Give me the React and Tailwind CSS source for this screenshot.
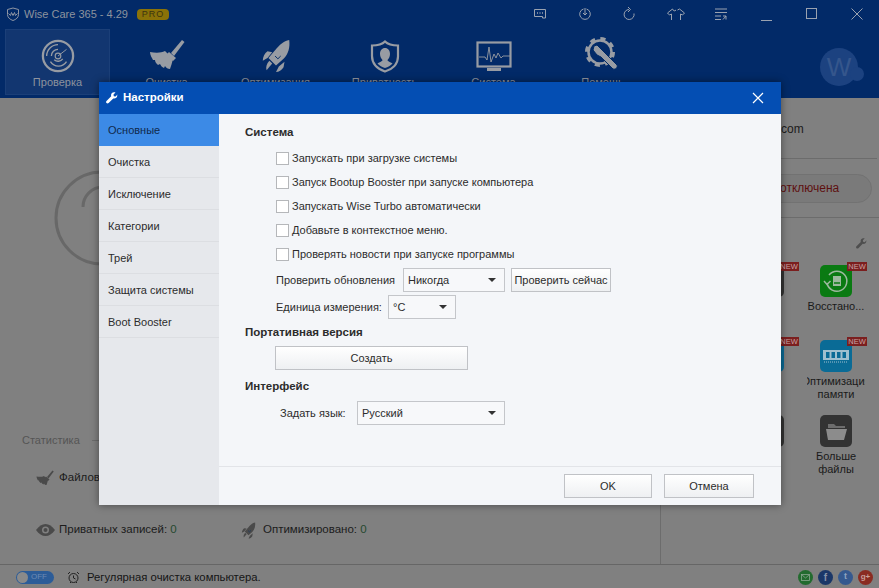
// App.jsx
const font = { fontFamily: '"Liberation Sans", Arial, sans-serif' };

const Radar = () => (
  <svg width="34" height="34" viewBox="0 0 36 36" fill="none" stroke="#989ca3">
    <circle cx="18" cy="18" r="16" strokeWidth="2.4" />
    <path d="M6 18a12 12 0 0 1 12-12M10 24a10 10 0 0 0 17 0M11 18a7 7 0 0 1 7-7M14 22a6 6 0 0 0 9-1" strokeWidth="1.4" />
    <circle cx="18" cy="18" r="3" strokeWidth="1.2" />
    <path d="M18 18l9-7" strokeWidth="1" />
  </svg>
);

const Broom = ({ size = 36, color = "#989ca3" }) => (
  <svg width={size} height={size} viewBox="0 0 36 36" fill={color}>
    <path d="M22 16L33 3l2.500 2L25 19z" />
    <path d="M20 15l7 6-3 3-7-6z" />
    <path d="M1 15c6 1 11 1 15-1l8 8c-1 4-2 7-3 10-2 0-4-1-5-3l-1 2c-2-1-3-2-4-4l-2 1c-2-2-3-3-3-5l-2 0C3 21 1 18 1 15z" />
  </svg>
);

const Rocket = ({ size = 34, color = "#989ca3" }) => (
  <svg width={size} height={size} viewBox="0 0 36 36" fill={color}>
    <path d="M32 1c1 8-1 15-6 20l-8 7-8-8 7-8C22 6 26 2 32 1z" />
    <path d="M9 13l5 1-5 6-5 3c0-4 2-8 5-10zM27 24l-1 6c-2 3-5 5-8 5l3-6z" />
    <path d="M11 23l3 3-6 7c-1-3 0-7 3-10z" />
    <path d="M17 18l3 3 3-3" fill="none" stroke="#002a66" strokeWidth="1" />
  </svg>
);

const Shield = () => (
  <svg width="30" height="33" viewBox="0 0 30 33" fill="none">
    <path d="M15 1.500c3 3 8 4 13 4v11c0 8-6 13-13 15C8 29 2 24 2 16V5.500c5 0 10-1 13-4z" stroke="#989ca3" strokeWidth="2.200" />
    <path d="M15 8c3 0 5 2.500 5 6 0 3-1.500 5-2.500 6 0 1.500 3 2 5 3.500-2 2-4.500 3.500-7.500 4.500-3-1-5.500-2.500-7.500-4.500 2-1.500 5-2 5-3.500-1-1-2.500-3-2.500-6 0-3.500 2-6 5-6z" fill="#989ca3" />
  </svg>
);

const Monitor = () => (
  <svg width="36" height="32" viewBox="0 0 36 32" fill="none">
    <rect x="1.500" y="1.500" width="33" height="24" stroke="#989ca3" strokeWidth="2.200" />
    <path d="M3 16h6l2 3 2-13 2 15 3-8 2 4 2-5 3 5 2-2h7" stroke="#989ca3" strokeWidth="0.900" />
    <rect x="11" y="27" width="14" height="3" fill="#989ca3" />
  </svg>
);

const Gear = () => (
  <svg width="36" height="36" viewBox="0 0 36 36" fill="none">
    <circle cx="15" cy="15" r="11.500" stroke="#989ca3" strokeWidth="2.500" />
    <circle cx="15" cy="15" r="13" stroke="#989ca3" strokeWidth="4" strokeDasharray="5 5.200" />
    <path d="M9 9l3-1 5 5 3 3 12 12c1 2-1 5-4 4L16 20l-4-2-4-5z" fill="#989ca3" stroke="#002a66" strokeWidth="1" />
  </svg>
);

const Wrench = ({ size = 12, color = "#fff" }) => (
  <svg width={size} height={size} viewBox="0 0 12 12" fill={color}>
    <path d="M11.500 2.500L9.500 4.500 7.800 4.200 7.500 2.500 9.500.5C8 0 6.500.3 5.700 1.300 5 2.200 4.900 3.300 5.200 4.300L.5 9c-.6.7-.6 1.500 0 2.100.6.600 1.500.6 2.100 0l4.700-4.700c1 .3 2.200.1 3-.6 1-1 1.200-2.300.7-3.300z" />
  </svg>
);

const iconProps = { width: 16, height: 16, viewBox: "0 0 16 16", fill: "none", stroke: "#9aa2b0", strokeWidth: 1 };

const winIcons = [
  <svg key="msg" {...iconProps}>
    <path d="M2.500 3.500h11v8.500h-3v-1.500h-8z" />
    <path d="M5 7h1M7.500 7h1M10 7h1" strokeWidth="1.300" />
  </svg>,
  <svg key="upd" {...iconProps}>
    <path d="M9.500 3a5.300 5.300 0 1 1-3 0" />
    <path d="M8 2v7M6 7l2 2 2-2" />
  </svg>,
  <svg key="redo" {...iconProps}>
    <path d="M7 3.500a5 5 0 1 0 5 4" />
    <path d="M6 1l2.500 2.500L6 6" />
  </svg>,
  <svg key="skin" {...iconProps} width="20" viewBox="0 0 20 16">
    <path d="M6.500 3L1.500 7l2 2 2-1v6M13.500 3l5 4-2 2-2-1v6M6.500 3c1 2 2 2.500 3.500 1M13.500 3l-2 1" />
  </svg>,
  <svg key="menu" {...iconProps}>
    <path d="M2 3h12M2 6.500h12M2 10h6M2 13.500h6M10 13.500l3-3.500M10 10h3v3.500" />
  </svg>,
  <svg key="min" {...iconProps}>
    <path d="M2 14.500h11" />
  </svg>,
  <svg key="max" {...iconProps}>
    <rect x="2.500" y="2.500" width="10" height="10" />
  </svg>,
  <svg key="close" {...iconProps}>
    <path d="M2.500 2.500l11 11M13.500 2.500l-11 11" />
  </svg>,
];

const tabs = [
  { label: "Проверка", icon: <Radar />, active: true },
  { label: "Очистка", icon: <Broom /> },
  { label: "Оптимизация", icon: <Rocket /> },
  { label: "Приватность", icon: <Shield /> },
  { label: "Система", icon: <Monitor /> },
  { label: "Помощь", icon: <Gear /> },
];

const Tab = ({ label, icon, active }) => (
  <div
    className={`flex h-[66px] w-[105px] flex-col items-center border ${
      active ? "border-[#1b3f78] bg-[#123670]" : "border-transparent"
    }`}
  >
    <div className="flex h-[43px] items-end">{icon}</div>
    <div className="mt-[2px] text-[11px] leading-[14px] text-[#8d939e]">{label}</div>
  </div>
);

const NewBadge = () => (
  <div className="absolute right-[-15px] top-[-3px] w-[20px] bg-[#7b1f1f] text-center text-[7.500px] leading-[9px] text-[#c9a3a3]">NEW</div>
);

const Tile = ({ bg, badge, lines, children }) => (
  <div className="flex w-[68px] flex-col items-center">
    <div className={`relative flex h-[32px] w-[32px] items-center justify-center rounded-[5px] ${bg}`}>
      {children}
      {badge && <NewBadge />}
    </div>
    <div className="mt-[3px] w-[58px] overflow-hidden text-[11px] leading-[13px] text-[#1a1a1a]">
      {lines.map((l) => (
        <div key={l} className="flex justify-center whitespace-nowrap">
          {l}
        </div>
      ))}
    </div>
  </div>
);

const Check = ({ children }) => (
  <div className="flex h-[24px] items-center">
    <div className="h-[13px] w-[13px] border border-[#b5b7ba] bg-white" />
    <span className="ml-[3px]">{children}</span>
  </div>
);

const Select = ({ w, value }) => (
  <div className={`flex h-[24px] items-center justify-between border border-[#c4c6ca] bg-[#f7f8fa] pl-[4px] pr-[8px] ${w}`}>
    <span>{value}</span>
    <span className="h-0 w-0 border-x-[4px] border-t-[4px] border-x-transparent border-t-[#333]" />
  </div>
);

const Btn = ({ w, children }) => (
  <div className={`flex h-[24px] items-center justify-center border border-[#c0c2c6] bg-gradient-to-b from-white to-[#eef0f2] pt-[1px] ${w}`}>
    {children}
  </div>
);

const sideItems = ["Очистка", "Исключение", "Категории", "Трей", "Защита системы", "Boot Booster"];

const Stat = ({ icon, label, w }) => (
  <div className={`flex items-center ${w}`}>
    <div className="flex w-[23px] justify-start">{icon}</div>
    <span>{label}</span>
  </div>
);

export default function App() {
  return (
    <div className="relative flex h-[588px] w-[879px] flex-col overflow-hidden bg-[#808080] text-[11px] text-[#2c2c2c]" style={font}>
      {/* top bar */}
      <div className="h-[98px] shrink-0 bg-[#022a68]">
        <div className="flex h-[28px] items-center pl-[6px]">
          <svg width="14" height="14" viewBox="0 0 14 14" fill="none" stroke="#8f96a4" strokeWidth="1">
            <path d="M7 1l5.500 1.500v5C12.500 10.500 10 12.500 7 13.500 4 12.500 1.500 10.500 1.500 7.500v-5z" />
            <path d="M2.500 6.500l2 2 1-3 1.500 3 1.500-3 1 3 2-2" />
          </svg>
          <span className="ml-[4px] text-[11px] text-[#8d939e]">Wise Care 365 - 4.29</span>
          <span className="ml-[9px] w-[32px] rounded-[4px] bg-[#8a7208] text-center text-[9px] leading-[11px] tracking-[1px] text-[#3a3510]">PRO</span>
          <div className="ml-auto mr-[-1px] flex items-center">
            {winIcons.map((icon, i) => (
              <div key={i} className="flex w-[45.400px] justify-center">
                {icon}
              </div>
            ))}
          </div>
        </div>
        <div className="mt-[1px] flex gap-[4px] pl-[5px]">
          {tabs.map((t) => (
            <Tab key={t.label} {...t} />
          ))}
          <div className="relative ml-[161px] mt-[19px] flex h-[38px] w-[38px] items-center justify-center rounded-full bg-[#1c4280] text-[26px] text-[#35568c]">
            W
            <div className="absolute left-[30px] top-[19px] h-[14px] w-[14px] rounded-full bg-[#1c4280]" />
          </div>
        </div>
      </div>

      {/* page under the dialog */}
      <div className="flex min-h-0 flex-1">
        <div className="w-[661px] shrink-0 border-r border-[#6c6c6c]">
          <div className="ml-[54px] mt-[72px]">
            <svg width="96" height="96" viewBox="0 0 96 96" fill="none" stroke="#686868">
              <circle cx="48" cy="48" r="46" strokeWidth="3" />
              <path d="M29 37a20 20 0 0 1 20-20" strokeWidth="3" />
            </svg>
          </div>
          <div className="ml-[22px] mt-[167px] flex h-[14px] items-center text-[#555]">
            Статистика
            <div className="ml-[12px] h-px w-[120px] bg-[#6c6c6c]" />
          </div>
          <div className="ml-[36px] mt-[21px] flex h-[20px] items-center text-[11.500px] text-[#1c1c1c]">
            <Stat icon={<Broom size={18} color="#4a4a4a" />} label="Файлов" />
          </div>
          <div className="ml-[36px] mt-[32px] flex h-[20px] items-center text-[11.500px] text-[#1c1c1c]">
            <Stat
              w="w-[204px]"
              icon={
                <svg width="19" height="12" viewBox="0 0 19 12">
                  <path d="M0 6c3-4 6-6 9.500-6S16 2 19 6c-3 4-6 6-9.500 6S3 10 0 6z" fill="#4a4a4a" />
                  <circle cx="9.500" cy="6" r="3.500" fill="#808080" />
                  <circle cx="9.500" cy="6" r="2" fill="#4a4a4a" />
                </svg>
              }
              label={
                <>
                  Приватных записей: <span className="text-[#26492f]">0</span>
                </>
              }
            />
            <Stat
              icon={<Rocket size={17} color="#4a4a4a" />}
              label={
                <>
                  Оптимизировано: <span className="text-[#26492f]">0</span>
                </>
              }
            />
          </div>
        </div>

        <div className="min-w-0 flex-1">
          <div className="mx-[2px] flex h-[61px] items-center justify-start border-b border-[#6c6c6c] pl-[118px] pt-[2px] text-[12px] text-[#1c1c1c]">
            com
          </div>
          <div className="flex h-[59px] items-center border-b border-[#6c6c6c] pl-[2px] pr-[7px]">
            <div className="flex h-[29px] w-full items-center rounded-full border border-[#727272] bg-[#7a7a7a] pl-[116px] text-[12px] text-[#5e1010]">
              отключена
            </div>
          </div>
          <div className="flex h-[47px] items-center justify-end pr-[12px] pt-[3px]">
            <Wrench size={11} color="#4e4e4e" />
          </div>
          <div className="flex flex-col pl-[73px]">
            <div className="flex h-[75px]">
              <Tile bg="bg-[#333]" badge lines={["..."]} />
              <Tile bg="bg-[#0a7a12]" badge lines={["Восстано..."]}>
                <svg width="26" height="26" viewBox="0 0 26 26" fill="none" stroke="#9db99e" strokeWidth="1.500">
                  <path d="M4 15a10 10 0 1 0 2-8" />
                  <path d="M1 13l3 3.500L7.500 13" />
                  <rect x="10" y="8" width="8" height="10" fill="#9db99e" stroke="none" />
                  <path d="M11 15h6" stroke="#0a7a12" />
                </svg>
              </Tile>
            </div>
            <div className="flex h-[75px]">
              <Tile bg="bg-[#0a6b96]" badge lines={["й"]} />
              <Tile bg="bg-[#0a6b96]" badge lines={["Оптимизация", "памяти"]}>
                <svg width="28" height="14" viewBox="0 0 28 14">
                  <rect x="1" y="1" width="26" height="10" fill="#9fc0cf" />
                  <rect x="4" y="3" width="3.500" height="6" fill="#0a6b96" />
                  <rect x="9.500" y="3" width="3.500" height="6" fill="#0a6b96" />
                  <rect x="15" y="3" width="3.500" height="6" fill="#0a6b96" />
                  <rect x="20.500" y="3" width="3.500" height="6" fill="#0a6b96" />
                  <path d="M2 13h24" stroke="#9fc0cf" strokeDasharray="1 1" />
                </svg>
              </Tile>
            </div>
            <div className="flex">
              <Tile bg="bg-[#333]" lines={["ка", "и"]} />
              <Tile bg="bg-[#333]" lines={["Больше", "файлы"]}>
                <svg width="24" height="20" viewBox="0 0 24 20">
                  <path d="M4 3h6l2 2h9v2H4z" fill="#6d6d6d" />
                  <path d="M2 8h21l-3 11H4z" fill="#8c8c8c" />
                </svg>
              </Tile>
            </div>
          </div>
        </div>
      </div>

      {/* status bar */}
      <div className="flex h-[24px] shrink-0 items-center border-t border-[#666] pl-[16px] pt-[1px] text-[11.300px] text-[#151515]">
        <div className="flex h-[13px] w-[38px] items-center rounded-full bg-[#2c5c98] pl-[1px]">
          <div className="h-[11px] w-[11px] rounded-full bg-[#8a8a8a]" />
          <span className="ml-[3px] text-[8px] text-[#6d8bb3]">OFF</span>
        </div>
        <svg className="ml-[13px]" width="13" height="13" viewBox="0 0 13 13" fill="none" stroke="#222" strokeWidth="1">
          <circle cx="6.500" cy="7" r="4.500" />
          <path d="M6.500 4.500V7l2 1M1 3l2-2M12 3l-2-2M3 12l1-1M10 12l-1-1" />
        </svg>
        <span className="ml-[7px]">Регулярная очистка компьютера.</span>
        <div className="ml-auto flex items-center gap-[5px] pr-[6px]">
          <div className="flex h-[15px] w-[15px] items-center justify-center rounded-full bg-[#236b2f]">
            <svg width="9" height="7" viewBox="0 0 9 7" fill="none" stroke="#8aa78f" strokeWidth="0.800">
              <rect x="0.500" y="0.500" width="8" height="6" />
              <path d="M.5.5l4 3.500 4-3.500" />
            </svg>
          </div>
          <div className="flex h-[15px] w-[15px] items-center justify-center rounded-full bg-[#1b3768] text-[10px] font-bold text-[#8793a8]">f</div>
          <div className="flex h-[15px] w-[15px] items-center justify-center rounded-full bg-[#35598f] text-[9px] font-bold text-[#8fa3bf]">t</div>
          <div className="flex h-[15px] w-[15px] items-center justify-center rounded-full bg-[#8a2c22] text-[8px] font-bold text-[#c9a09b]">g+</div>
        </div>
      </div>

      {/* settings dialog */}
      <div className="absolute left-[99px] top-[82px] flex h-[423px] w-[682px] flex-col shadow-[0_0_8px_rgba(0,0,0,0.45)]">
        <div className="flex h-[32px] shrink-0 items-center bg-[#044eb3] pl-[7px] pr-[17px]">
          <Wrench />
          <span className="ml-[5px] text-[11.500px] font-bold text-white">Настройки</span>
          <svg className="ml-auto" width="12" height="12" viewBox="0 0 12 12" stroke="#fff" strokeWidth="1.200">
            <path d="M1 1l10 10M11 1L1 11" />
          </svg>
        </div>
        <div className="flex min-h-0 flex-1">
          <div className="w-[120px] shrink-0 bg-[#e6e8ec]">
            <div className="flex h-[32px] items-center bg-[#3c8ae6] pl-[9px] pt-[1px] text-[#10294d]">Основные</div>
            {sideItems.map((s) => (
              <div key={s} className="flex h-[32px] items-center border-b border-[#dcdee2] pl-[9px] pt-[1px]">
                {s}
              </div>
            ))}
          </div>
          <div className="flex min-w-0 flex-1 flex-col bg-[#f4f6f9]">
            <div className="flex-1 pl-[26px]">
              <div className="mt-[11px] text-[11.500px] font-bold leading-[14px]">Система</div>
              <div className="ml-[31px] mt-[7px]">
                <Check>Запускать при загрузке системы</Check>
                <Check>Запуск Bootup Booster при запуске компьютера</Check>
                <Check>Запускать Wise Turbo автоматически</Check>
                <Check>Добавьте в контекстное меню.</Check>
                <Check>Проверять новости при запуске программы</Check>
              </div>
              <div className="ml-[31px] mt-[2px] flex items-center">
                <span className="w-[127px]">Проверить обновления</span>
                <Select w="w-[102px]" value="Никогда" />
                <Btn w="ml-[6px] w-[100px]">Проверить сейчас</Btn>
              </div>
              <div className="ml-[31px] mt-[3px] flex items-center">
                <span className="w-[112px]">Единица измерения:</span>
                <Select w="w-[68px]" value="°C" />
              </div>
              <div className="mt-[6px] text-[11.500px] font-bold leading-[14px]">Портативная версия</div>
              <Btn w="ml-[30px] mt-[7px] w-[193px]">Создать</Btn>
              <div className="mt-[9px] text-[11.500px] font-bold leading-[14px]">Интерфейс</div>
              <div className="ml-[35px] mt-[8px] flex items-center">
                <span className="w-[77px]">Задать язык:</span>
                <Select w="w-[148px]" value="Русский" />
              </div>
            </div>
            <div className="flex h-[39px] shrink-0 items-center justify-end gap-[12px] border-t border-[#e2e4e8] pr-[27px]">
              <Btn w="w-[88px]">OK</Btn>
              <Btn w="w-[90px]">Отмена</Btn>
            </div>
          </div>
        </div>
      </div>
    </div>
  );
}
